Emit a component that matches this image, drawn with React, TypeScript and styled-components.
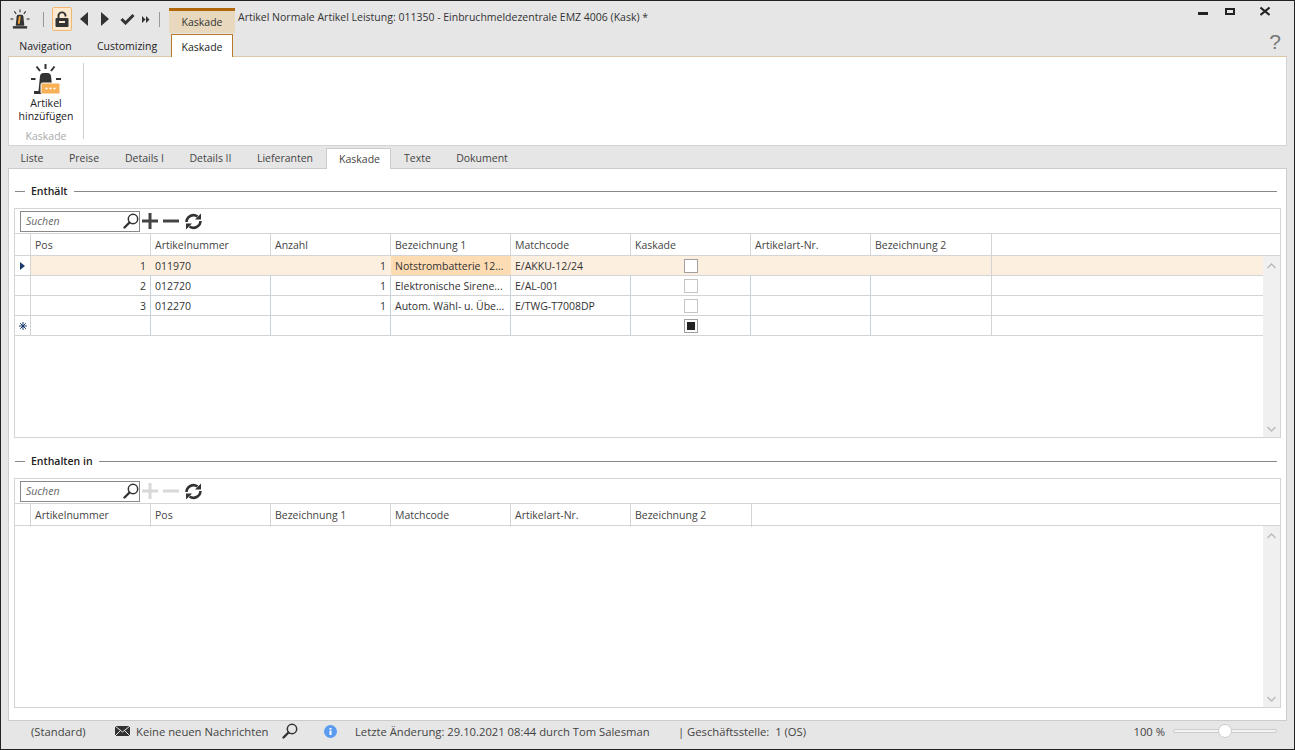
import React from 'react';
import styled, { createGlobalStyle } from 'styled-components';

const GlobalStyle = createGlobalStyle`
    html, body { margin: 0; padding: 0; height: 100%; overflow: hidden; }
    body { font-family: "Open Sans", "Noto Sans", "Liberation Sans", sans-serif; font-size: 10.5px; color: #333; }
`;

const Window = styled.div`
    width: 1295px;
    height: 750px;
    box-sizing: border-box;
    border: 1px solid #222;
    background: #e6e6e6;
    display: flex;
    flex-direction: column;
`;

const TitleBar = styled.div`
    height: 32px;
    flex: none;
    display: flex;
    align-items: flex-end;
`;

const QuickBar = styled.div`
    display: flex;
    align-items: center;
    height: 24px;
    margin-bottom: 2px;
    padding-left: 9px;
    flex: none;
`;

const QuickSlot = styled.div<{ $w: number }>`
    width: ${p => p.$w}px;
    display: flex;
    justify-content: center;
    flex: none;
`;

const QuickSep = styled.div<{ $ml: number; $mr: number }>`
    width: 1px;
    height: 15px;
    background: #999;
    margin: 0 ${p => p.$mr}px 0 ${p => p.$ml}px;
    flex: none;
`;

const LockButton = styled.div`
    width: 20px;
    height: 24px;
    box-sizing: border-box;
    border: 1px solid #f3b772;
    border-radius: 2px;
    background: #fde9d0;
    display: flex;
    align-items: center;
    justify-content: center;
    flex: none;
`;

const ContextTab = styled.div`
    width: 66px;
    height: 25px;
    margin-left: 9px;
    box-sizing: border-box;
    border-top: 3px solid #b0680a;
    background: #e8d8bd;
    text-align: center;
    line-height: 22px;
    color: #333;
    flex: none;
`;

const WindowTitle = styled.div`
    margin-left: 3px;
    align-self: flex-start;
    padding-top: 9px;
    line-height: 15px;
    color: #333;
`;

const WindowButtons = styled.div`
    margin-left: auto;
    align-self: flex-start;
    display: flex;
    padding-top: 1px;
    padding-right: 24px;
`;

const WindowButton = styled.div<{ $ml: number }>`
    margin-left: ${p => p.$ml}px;
    display: flex;
`;

const RibbonTabs = styled.div`
    height: 23px;
    flex: none;
    display: flex;
    align-items: flex-end;
    padding-left: 7px;
    position: relative;
    z-index: 1;
`;

const RibbonTab = styled.div<{ $active?: boolean; $w: number }>`
    width: ${p => p.$w}px;
    height: 22px;
    box-sizing: border-box;
    text-align: center;
    line-height: 25px;
    color: #222;
    flex: none;
    ${p => p.$active ? `
        background: #fff;
        border: 1px solid #b87a2a;
        border-bottom: none;
        height: 23px;
        margin-bottom: -1px;
    ` : ''}
`;

const HelpMark = styled.div`
    margin-left: auto;
    margin-right: 13px;
    margin-bottom: 3px;
    font-size: 21px;
    line-height: 22px;
    color: #777;
    font-family: "Liberation Sans", sans-serif;
`;

const RibbonPanel = styled.div`
    height: 90px;
    flex: none;
    margin: 0 7px;
    box-sizing: border-box;
    background: #fff;
    border: 1px solid #d4d4d4;
    border-top-color: #dcc7a6;
    display: flex;
    padding-top: 6px;
`;

const RibbonGroup = styled.div`
    width: 75px;
    height: 76px;
    border-right: 1px solid #d0d0d0;
    display: flex;
    flex-direction: column;
    align-items: center;
    box-sizing: border-box;
`;

const RibbonIcon = styled.div`
    flex: none;
    display: flex;
`;

const RibbonLabel = styled.div`
    flex: none;
    margin-top: 2px;
    text-align: center;
    line-height: 13px;
    color: #222;
`;

const RibbonGroupName = styled.div`
    flex: none;
    margin-top: 7px;
    line-height: 13px;
    color: #aaa;
`;

const DocTabs = styled.div`
    height: 22px;
    flex: none;
    display: flex;
    align-items: flex-end;
    padding-left: 7px;
    position: relative;
    z-index: 1;
`;

const DocTab = styled.div<{ $active?: boolean; $w: number }>`
    width: ${p => p.$w}px;
    height: 20px;
    box-sizing: border-box;
    text-align: center;
    line-height: 20px;
    color: #444;
    flex: none;
    ${p => p.$active ? `
        background: #fff;
        border: 1px solid #ccc;
        border-bottom: none;
        height: 21px;
        margin-bottom: -1px;
        padding-left: 2px;
    ` : ''}
`;

const ContentPanel = styled.div`
    height: 553px;
    flex: none;
    margin: 0 7px;
    box-sizing: border-box;
    background: #fff;
    border: 1px solid #ccc;
    padding: 0 5px;
    display: flex;
    flex-direction: column;
`;

const GroupHeader = styled.div<{ $mt: number }>`
    height: 16px;
    margin-top: ${p => p.$mt}px;
    margin-bottom: 9px;
    margin-right: 4px;
    display: flex;
    align-items: center;
    gap: 6px;
    font-weight: 600;
    color: #222;
    flex: none;
    &::before { content: ""; width: 10px; height: 1px; background: #888; margin-left: 1px; }
    &::after { content: ""; flex: 1; height: 1px; background: #888; }
`;

const GridBox = styled.div`
    height: 230px;
    flex: none;
    box-sizing: border-box;
    border: 1px solid #d4d4d4;
    display: flex;
    flex-direction: column;
`;

const GridToolbar = styled.div`
    height: 25px;
    flex: none;
    box-sizing: border-box;
    display: flex;
    align-items: center;
    padding-left: 5px;
    border-bottom: 1px solid #d4d4d4;
`;

const SearchBox = styled.div`
    width: 120px;
    height: 21px;
    box-sizing: border-box;
    border: 1px solid #8a8a8a;
    display: flex;
    align-items: center;
    justify-content: space-between;
    padding: 0 0 0 5px;
    font-style: italic;
    color: #666;
    flex: none;
`;

const ToolIcons = styled.div`
    display: flex;
    align-items: center;
    gap: 5px;
    margin-left: 2px;
`;

const ColumnRow = styled.div<{ $columns: string; $h: number }>`
    display: grid;
    grid-template-columns: ${p => p.$columns};
    height: ${p => p.$h}px;
    flex: none;
    box-sizing: border-box;
    border-bottom: 1px solid #d4d4d4;
`;

const HeaderCell = styled.div`
    box-sizing: border-box;
    border-right: 1px solid #d4d4d4;
    padding-left: 4px;
    line-height: 23px;
    color: #444;
    white-space: nowrap;
`;

const GridBody = styled.div`
    flex: 1;
    display: flex;
    min-height: 0;
`;

const Rows = styled.div`
    flex: 1;
    display: flex;
    flex-direction: column;
`;

const BodyRow = styled(ColumnRow)<{ $selected?: boolean }>`
    background: ${p => p.$selected ? '#fdefdf' : '#fff'};
`;

const Cell = styled.div<{ $right?: boolean; $focus?: boolean; $center?: boolean; $plain?: boolean; $flat?: boolean }>`
    box-sizing: border-box;
    border-right: 1px solid ${p => p.$flat ? 'transparent' : p.$plain ? '#d4d4d4' : '#c3d2e0'};
    padding: 0 4px;
    line-height: 21px;
    white-space: nowrap;
    overflow: hidden;
    color: #333;
    text-align: ${p => p.$right ? 'right' : 'left'};
    background: ${p => p.$focus ? '#fddcb3' : 'transparent'};
    ${p => p.$center ? 'display: flex; align-items: center; justify-content: center;' : ''}
`;

const Indicator = styled(Cell)`
    padding: 0;
    display: flex;
    align-items: center;
    justify-content: center;
    background: #fff;
    border-right-color: #d4d4d4;
`;

const Check = styled.div<{ $mixed?: boolean; $dim?: boolean }>`
    width: 14px;
    height: 14px;
    box-sizing: border-box;
    border: 1px solid ${p => p.$dim ? '#c4c4c4' : '#a0a0a0'};
    background: #fff;
    display: flex;
    align-items: center;
    justify-content: center;
    &::after {
        content: "";
        display: ${p => p.$mixed ? 'block' : 'none'};
        width: 8px;
        height: 8px;
        background: #222;
    }
`;

const ScrollBar = styled.div`
    width: 17px;
    flex: none;
    background: #f0f0f0;
    display: flex;
    flex-direction: column;
    justify-content: space-between;
    align-items: center;
    padding: 7px 0 5px;
    box-sizing: border-box;
`;

const StatusBar = styled.div`
    flex: 1;
    display: flex;
    align-items: center;
    padding: 0 0 8px 30px;
    color: #444;
    font-size: 11.25px;
    white-space: nowrap;
`;

const StatusItem = styled.div<{ $w: number }>`
    width: ${p => p.$w}px;
    flex: none;
    display: flex;
    align-items: center;
    gap: 6px;
`;

const Zoom = styled.div`
    margin-left: auto;
    margin-right: 17px;
    display: flex;
    align-items: center;
    gap: 8px;
`;

const SliderTrack = styled.div`
    width: 104px;
    height: 4px;
    box-sizing: border-box;
    border: 1px solid #ccc;
    border-radius: 2px;
    background: #f4f4f4;
    position: relative;
`;

const SliderThumb = styled.div`
    position: absolute;
    left: 44px;
    top: -6px;
    width: 14px;
    height: 14px;
    box-sizing: border-box;
    border: 1px solid #ccc;
    border-radius: 50%;
    background: #fff;
`;

const RibbonBeacon = () => (
    <svg width="32" height="32" viewBox="0 0 32 32">
        <g stroke="#333" strokeWidth="2">
            <line x1="15.5" y1="1" x2="15.5" y2="6" />
            <line x1="6.5" y1="3.5" x2="10" y2="8" />
            <line x1="24.5" y1="3.5" x2="21" y2="8" />
            <line x1="1" y1="16" x2="5.5" y2="16" />
            <line x1="26" y1="16" x2="31" y2="16" />
        </g>
        <path d="M8.5 28 L10 13 Q10.5 10 13.5 10 H17.5 Q20.5 10 21 13 L22 22 H11 V28 Z" fill="#333" />
        <rect x="4" y="28" width="14" height="3" fill="#333" />
        <rect x="11" y="20" width="19" height="11" rx="1.5" fill="#f7b055" stroke="#fff" strokeWidth="1" />
        <circle cx="16.5" cy="25.5" r="1.1" fill="#fff" />
        <circle cx="20.5" cy="25.5" r="1.1" fill="#fff" />
        <circle cx="24.5" cy="25.5" r="1.1" fill="#fff" />
    </svg>
);

const SmallBeacon = () => (
    <svg width="21" height="21" viewBox="0 0 21 21">
        <g stroke="#333" strokeWidth="1.2">
            <line x1="10.5" y1="0" x2="10.5" y2="3" />
            <line x1="4.5" y1="2" x2="6.5" y2="4.5" />
            <line x1="16.5" y1="2" x2="14.5" y2="4.5" />
            <line x1="0.5" y1="10" x2="3.5" y2="10" />
            <line x1="17.5" y1="10" x2="20.5" y2="10" />
        </g>
        <path d="M6 17 L7 7 Q7.3 5.5 9 5.5 H12 Q13.7 5.5 14 7 L15 17 Z" fill="#333" />
        <path d="M9.3 7 L11.3 7 L10.2 15 L8.2 15 Z" fill="#f2a53c" />
        <rect x="3" y="17.5" width="15" height="2.5" fill="#333" />
    </svg>
);

const LockIcon = () => (
    <svg width="14" height="16" viewBox="0 0 14 16">
        <path d="M2.5 7 V4.5 A4.5 4 0 0 1 11.5 4.5 V5.5 H9.5 V4.5 A2.5 2.3 0 0 0 4.5 4.5 V7 Z" fill="#333" />
        <rect x="0.5" y="7" width="13" height="9" rx="1" fill="#333" />
        <rect x="4" y="10" width="6" height="2" fill="#fde9d0" />
    </svg>
);

const Triangle = ({ left = false }: { left?: boolean }) => (
    <svg width="8" height="14" viewBox="0 0 8 14">
        <path d={left ? 'M8 0 V14 L0 7 Z' : 'M0 0 V14 L8 7 Z'} fill="#333" />
    </svg>
);

const CheckIcon = () => (
    <svg width="15" height="12" viewBox="0 0 15 12">
        <path d="M1.5 6 L5.5 10 L13.5 2" fill="none" stroke="#333" strokeWidth="3" />
    </svg>
);

const MoreIcon = () => (
    <svg width="8" height="7" viewBox="0 0 8 7">
        <path d="M0 0 L3.5 3.5 L0 7 Z M4 0 L7.5 3.5 L4 7 Z" fill="#333" />
    </svg>
);

const MagnifierIcon = () => (
    <svg width="16" height="16" viewBox="0 0 16 16">
        <circle cx="10" cy="6" r="4.7" fill="none" stroke="#333" strokeWidth="1.5" />
        <line x1="6.5" y1="9.5" x2="1.5" y2="14.5" stroke="#333" strokeWidth="2.4" strokeLinecap="round" />
    </svg>
);

const PlusIcon = ({ disabled }: { disabled?: boolean }) => (
    <svg width="16" height="16" viewBox="0 0 16 16">
        <path d="M6.5 0 H9.5 V6.5 H16 V9.5 H9.5 V16 H6.5 V9.5 H0 V6.5 H6.5 Z" fill={disabled ? '#d8d8d8' : '#444'} />
    </svg>
);

const MinusIcon = ({ disabled }: { disabled?: boolean }) => (
    <svg width="16" height="16" viewBox="0 0 16 16">
        <rect x="0" y="6.5" width="16" height="3" fill={disabled ? '#d8d8d8' : '#444'} />
    </svg>
);

const RefreshIcon = () => (
    <svg width="19" height="19" viewBox="0 0 19 19">
        <path d="M2.5 10 A7 7 0 0 1 13.5 4.5" fill="none" stroke="#333" strokeWidth="2.6" />
        <path d="M16.5 9 A7 7 0 0 1 5.5 14.5" fill="none" stroke="#333" strokeWidth="2.6" />
        <path d="M17 1.5 V7.5 H11 Z" fill="#333" />
        <path d="M2 17.5 V11.5 H8 Z" fill="#333" />
    </svg>
);

const ChevronIcon = ({ up }: { up?: boolean }) => (
    <svg width="9" height="6" viewBox="0 0 9 6">
        <path d={up ? 'M0.5 5 L4.5 1 L8.5 5' : 'M0.5 1 L4.5 5 L8.5 1'} fill="none" stroke="#bbb" strokeWidth="1.5" />
    </svg>
);

const MailIcon = () => (
    <svg width="15" height="10" viewBox="0 0 15 10">
        <rect width="15" height="10" fill="#333" />
        <path d="M0 0 L7.5 6 L15 0 M0 10 L5.5 4.5 M15 10 L9.5 4.5" fill="none" stroke="#e6e6e6" strokeWidth="1" />
    </svg>
);

const InfoIcon = () => (
    <svg width="13" height="13" viewBox="0 0 13 13">
        <circle cx="6.5" cy="6.5" r="6.5" fill="#5b9bf0" />
        <rect x="5.5" y="5.5" width="2" height="4.5" fill="#fff" />
        <rect x="5.5" y="3" width="2" height="1.6" fill="#fff" />
    </svg>
);

const MinimizeIcon = () => (
    <svg width="10" height="14" viewBox="0 0 10 14">
        <rect x="0" y="10" width="10" height="3" fill="#222" />
    </svg>
);

const MaximizeIcon = () => (
    <svg width="10" height="14" viewBox="0 0 10 14">
        <rect x="1" y="7" width="8" height="5" fill="none" stroke="#222" strokeWidth="2" />
    </svg>
);

const CloseIcon = () => (
    <svg width="10" height="14" viewBox="0 0 10 14">
        <path d="M0.5 5.5 L9.5 13 M9.5 5.5 L0.5 13" stroke="#222" strokeWidth="2" />
    </svg>
);

const TopColumns = '16px repeat(7, 120px) 121px 1fr';
const BottomColumns = '16px repeat(5, 120px) 121px 1fr';

const topHeaders = ['Pos', 'Artikelnummer', 'Anzahl', 'Bezeichnung 1', 'Matchcode', 'Kaskade', 'Artikelart-Nr.', 'Bezeichnung 2'];
const bottomHeaders = ['Artikelnummer', 'Pos', 'Bezeichnung 1', 'Matchcode', 'Artikelart-Nr.', 'Bezeichnung 2'];

const articles = [
    { pos: '1', nr: '011970', count: '1', name: 'Notstrombatterie 12...', code: 'E/AKKU-12/24' },
    { pos: '2', nr: '012720', count: '1', name: 'Elektronische Sirene...', code: 'E/AL-001' },
    { pos: '3', nr: '012270', count: '1', name: 'Autom. Wähl- u. Übe...', code: 'E/TWG-T7008DP' },
];

const Toolbar: React.FC<{ disabled?: boolean }> = ({ disabled }) => (
    <GridToolbar>
        <SearchBox>
            Suchen
            <MagnifierIcon />
        </SearchBox>
        <ToolIcons>
            <PlusIcon disabled={disabled} />
            <MinusIcon disabled={disabled} />
            <RefreshIcon />
        </ToolIcons>
    </GridToolbar>
);

const Scroll = () => (
    <ScrollBar>
        <ChevronIcon up />
        <ChevronIcon />
    </ScrollBar>
);

const App: React.FC = () => {
    return (
        <Window>
            <GlobalStyle />
            <TitleBar>
                <QuickBar>
                    <QuickSlot $w={20}><SmallBeacon /></QuickSlot>
                    <QuickSep $ml={13} $mr={8} />
                    <LockButton><LockIcon /></LockButton>
                    <QuickSlot $w={24}><Triangle left /></QuickSlot>
                    <QuickSlot $w={18}><Triangle /></QuickSlot>
                    <QuickSlot $w={26}><CheckIcon /></QuickSlot>
                    <QuickSlot $w={12}><MoreIcon /></QuickSlot>
                    <QuickSep $ml={7} $mr={0} />
                </QuickBar>
                <ContextTab>Kaskade</ContextTab>
                <WindowTitle>Artikel Normale Artikel Leistung: 011350 - Einbruchmeldezentrale EMZ 4006 (Kask) *</WindowTitle>
                <WindowButtons>
                    <WindowButton $ml={0}><MinimizeIcon /></WindowButton>
                    <WindowButton $ml={17}><MaximizeIcon /></WindowButton>
                    <WindowButton $ml={25}><CloseIcon /></WindowButton>
                </WindowButtons>
            </TitleBar>

            <RibbonTabs>
                <RibbonTab $w={75}>Navigation</RibbonTab>
                <RibbonTab $w={88}>Customizing</RibbonTab>
                <RibbonTab $w={62} $active>Kaskade</RibbonTab>
                <HelpMark>?</HelpMark>
            </RibbonTabs>

            <RibbonPanel>
                <RibbonGroup>
                    <RibbonIcon><RibbonBeacon /></RibbonIcon>
                    <RibbonLabel>Artikel<br />hinzüfügen</RibbonLabel>
                    <RibbonGroupName>Kaskade</RibbonGroupName>
                </RibbonGroup>
            </RibbonPanel>

            <DocTabs>
                <DocTab $w={48}>Liste</DocTab>
                <DocTab $w={56}>Preise</DocTab>
                <DocTab $w={65}>Details I</DocTab>
                <DocTab $w={67}>Details II</DocTab>
                <DocTab $w={82}>Lieferanten</DocTab>
                <DocTab $w={65} $active>Kaskade</DocTab>
                <DocTab $w={53}>Texte</DocTab>
                <DocTab $w={76}>Dokument</DocTab>
            </DocTabs>

            <ContentPanel>
                <GroupHeader $mt={14}>Enthält</GroupHeader>
                <GridBox>
                    <Toolbar />
                    <ColumnRow $columns={TopColumns} $h={22}>
                        <HeaderCell />
                        {topHeaders.map(title => <HeaderCell key={title}>{title}</HeaderCell>)}
                    </ColumnRow>
                    <GridBody>
                        <Rows>
                            {articles.map((article, index) => {
                                const selected = index === 0;
                                return (
                                    <BodyRow key={article.nr} $columns={TopColumns} $h={20} $selected={selected}>
                                        <Indicator>
                                            {selected && (
                                                <svg width="5" height="8" viewBox="0 0 5 8"><path d="M0 0 L5 4 L0 8 Z" fill="#1a3a6e" /></svg>
                                            )}
                                        </Indicator>
                                        <Cell $right $flat={selected}>{article.pos}</Cell>
                                        <Cell $flat={selected}>{article.nr}</Cell>
                                        <Cell $right $flat={selected}>{article.count}</Cell>
                                        <Cell $focus={selected} $flat={selected}>{article.name}</Cell>
                                        <Cell $flat={selected}>{article.code}</Cell>
                                        <Cell $center $flat={selected}><Check $dim={!selected} /></Cell>
                                        <Cell $flat={selected} />
                                        <Cell $plain />
                                        <div />
                                    </BodyRow>
                                );
                            })}
                            <BodyRow $columns={TopColumns} $h={20}>
                                <Indicator>
                                    <svg width="8" height="8" viewBox="0 0 8 8">
                                        <path d="M4 0 V8 M0 4 H8 M1.2 1.2 L6.8 6.8 M6.8 1.2 L1.2 6.8" stroke="#1a3a6e" strokeWidth="1" />
                                    </svg>
                                </Indicator>
                                <Cell />
                                <Cell />
                                <Cell />
                                <Cell />
                                <Cell />
                                <Cell $center><Check $mixed /></Cell>
                                <Cell />
                                <Cell $plain />
                                <div />
                            </BodyRow>
                        </Rows>
                        <Scroll />
                    </GridBody>
                </GridBox>

                <GroupHeader $mt={15}>Enthalten in</GroupHeader>
                <GridBox>
                    <Toolbar disabled />
                    <ColumnRow $columns={BottomColumns} $h={22}>
                        <HeaderCell />
                        {bottomHeaders.map(title => <HeaderCell key={title}>{title}</HeaderCell>)}
                    </ColumnRow>
                    <GridBody>
                        <Rows />
                        <Scroll />
                    </GridBody>
                </GridBox>
            </ContentPanel>

            <StatusBar>
                <StatusItem $w={84}>(Standard)</StatusItem>
                <StatusItem $w={167}><MailIcon /> Keine neuen Nachrichten</StatusItem>
                <StatusItem $w={42}><MagnifierIcon /></StatusItem>
                <StatusItem $w={31}><InfoIcon /></StatusItem>
                <StatusItem $w={323}>Letzte Änderung: 29.10.2021 08:44 durch Tom Salesman</StatusItem>
                <StatusItem $w={200}>| Geschäftsstelle:&nbsp; 1 (OS)</StatusItem>
                <Zoom>
                    100 %
                    <SliderTrack><SliderThumb /></SliderTrack>
                </Zoom>
            </StatusBar>
        </Window>
    );
};

export default App;
